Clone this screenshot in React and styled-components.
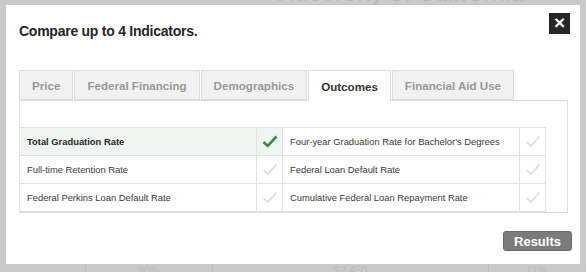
import React from "react";
import styled, { createGlobalStyle } from "styled-components";

const tabs = ["Price", "Federal Financing", "Demographics", "Outcomes", "Financial Aid Use"];

const rows = [
  ["Total Graduation Rate", "Four-year Graduation Rate for Bachelor's Degrees"],
  ["Full-time Retention Rate", "Federal Loan Default Rate"],
  ["Federal Perkins Loan Default Rate", "Cumulative Federal Loan Repayment Rate"],
];

const selected = "Total Graduation Rate";

const Check = ({ on }) => (
  <svg width="16" height="13" viewBox="0 0 16 13">
    <polyline
      points="1.5,7 5.8,11 14.5,1.5"
      fill="none"
      stroke={on ? "#3c8c48" : "#dcdcdc"}
      strokeWidth={on ? 2.6 : 1.6}
    />
  </svg>
);

const App = () => {
  return (
    <Page>
      <GlobalStyle />
      <BackTitle>University of California</BackTitle>
      <BackRow>
        <BackCell w={90} />
        <BackCell w={134}>90%</BackCell>
        <BackCell w={292}>$2,450</BackCell>
        <BackCell w={102}>11%</BackCell>
      </BackRow>
      <Modal>
        <Header>
          <Title>Compare up to 4 Indicators.</Title>
          <Close>×</Close>
        </Header>
        <TabBlock>
          <TabList>
            {tabs.map((t) => (
              <Tab key={t} active={t === "Outcomes"}>
                {t}
              </Tab>
            ))}
          </TabList>
          <Panel>
            <Table>
              <tbody>
                {rows.map((r) => (
                  <Row key={r[0]}>
                    {r.map((label) => {
                      const on = label === selected;
                      return (
                        <React.Fragment key={label}>
                          <Label on={on}>{label}</Label>
                          <CheckCell on={on}>
                            <Check on={on} />
                          </CheckCell>
                        </React.Fragment>
                      );
                    })}
                  </Row>
                ))}
              </tbody>
            </Table>
          </Panel>
        </TabBlock>
        <Footer>
          <Button>Results</Button>
        </Footer>
      </Modal>
    </Page>
  );
};

const GlobalStyle = createGlobalStyle`
  body {
    margin: 0;
    background: #c9c9c9;
    font-family: "Liberation Sans", Arial, sans-serif;
  }
`;

const Page = styled.div`
  position: relative;
  width: 586px;
  height: 272px;
  overflow: hidden;
  background: #c9c9c9;
  padding: 5px 6px 0 6px;
  box-sizing: border-box;
`;

const BackTitle = styled.div`
  position: absolute;
  top: -19px;
  left: 272px;
  font-size: 22px;
  font-weight: bold;
  color: #b8b8b8;
  letter-spacing: 0.5px;
`;

const BackRow = styled.div`
  position: absolute;
  left: 0;
  right: 0;
  bottom: -5px;
  height: 13px;
  display: flex;
`;

const BackCell = styled.div`
  width: ${(p) => p.w}px;
  border-right: 1px solid #bdbdbd;
  font-size: 11px;
  color: #bcbcbc;
  text-align: center;
`;

const Modal = styled.div`
  position: relative;
  width: 574px;
  height: 259px;
  background: #fff;
  padding: 8px 8px 0 13px;
  box-sizing: border-box;
  display: flex;
  flex-direction: column;
`;

const Header = styled.div`
  display: flex;
  justify-content: space-between;
  align-items: flex-start;
  height: 57px;
  padding-right: 2px;
`;

const Title = styled.h2`
  margin: 10px 0 0;
  font-size: 14px;
  line-height: 17px;
  font-weight: bold;
  color: #262626;
  letter-spacing: -0.25px;
`;

const Close = styled.div`
  width: 21px;
  height: 21px;
  background: #262626;
  color: #fff;
  font-size: 19px;
  font-weight: bold;
  line-height: 20px;
  text-align: center;
`;

const TabBlock = styled.div`
  margin-right: 4px;
`;

const TabList = styled.div`
  display: flex;
  gap: 1px;
  height: 30px;
`;

const Tab = styled.div`
  display: flex;
  align-items: center;
  padding: 0 12px;
  height: ${(p) => (p.active ? "31px" : "30px")};
  box-sizing: border-box;
  border: 1px solid #dcdcdc;
  border-bottom: ${(p) => (p.active ? "none" : "1px solid #dcdcdc")};
  background: ${(p) => (p.active ? "#fff" : "#f1f1f1")};
  color: ${(p) => (p.active ? "#333" : "#999")};
  font-size: 11.6px;
  font-weight: bold;
  position: relative;
  z-index: 1;
`;

const Panel = styled.div`
  border: 1px solid #dcdcdc;
  border-left-color: #e6e6e6;
  padding: 26px 21px 0 0;
`;

const Table = styled.table`
  width: 526px;
  border-collapse: collapse;
`;

const Row = styled.tr`
  height: 28px;
`;

const Label = styled.td`
  width: 230px;
  padding: 0 0 0 7px;
  border: 1px solid #e2e2e2;
  border-left: none;
  background: ${(p) => (p.on ? "#eef6ef" : "#fff")};
  color: ${(p) => (p.on ? "#262626" : "#3a3a3a")};
  font-size: 9.4px;
  font-weight: ${(p) => (p.on ? "bold" : "normal")};
`;

const CheckCell = styled.td`
  width: 25px;
  padding: 0;
  border: 1px solid #e2e2e2;
  background: ${(p) => (p.on ? "#eef6ef" : "#fff")};
  text-align: center;
  vertical-align: middle;
  line-height: 0;
`;

const Footer = styled.div`
  display: flex;
  justify-content: flex-end;
  margin-top: 18px;
`;

const Button = styled.button`
  width: 69px;
  height: 20px;
  padding: 0;
  border: 1px solid #6c6c6c;
  border-radius: 3px;
  background: #7b7b7b;
  color: #fff;
  font-family: "Liberation Sans", Arial, sans-serif;
  font-size: 13px;
  font-weight: bold;
`;

export default App;
